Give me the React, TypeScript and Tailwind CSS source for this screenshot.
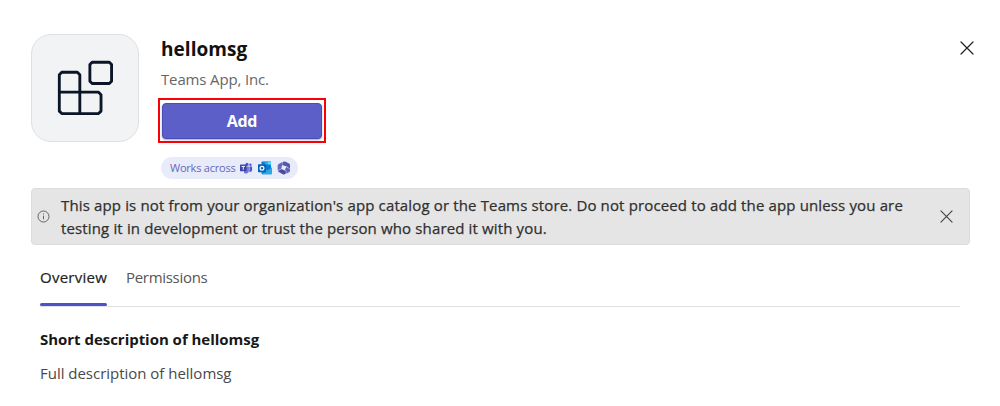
import React from "react";

function AppIcon() {
  return (
    <div className="h-[108px] w-[108px] shrink-0 rounded-[20px] border border-[#dfe0e2] bg-[#f2f3f5]">
      <svg viewBox="0.7 0.5 107.5 107.5" className="block h-full w-full" fill="none" stroke="#0b1528" strokeWidth="2.9" strokeLinejoin="round">
        <path d="M30.900 38.300h15.800l2.500 2.500v17.700h19l2.500 2.500v16.700l-2.500 2.500H30.900l-2.500-2.500V40.800Z" />
        <path d="M28.400 58.500H49.200V80.200" />
        <path d="M61.700 28.100h17.400l2.300 2.300v17l-2.300 2.300H61.700l-2.300-2.300v-17Z" />
      </svg>
    </div>
  );
}

function Cross({ className }: { className: string }) {
  return (
    <svg viewBox="0 0 14 14" className={className} fill="none" strokeLinecap="round">
      <path d="M1 1 13 13M13 1 1 13" />
    </svg>
  );
}

function TeamsIcon() {
  return (
    <svg viewBox="0 0 14 14" className="h-[14px] w-[14px]">
      <circle cx="8" cy="3.400" r="1.600" fill="#5059c9" />
      <circle cx="11.400" cy="3.700" r="1.200" fill="#5059c9" />
      <path d="M10.400 5.400h2.700v3.600a2 2 0 0 1-2.700 1.800Z" fill="#5059c9" />
      <path d="M5 5.400h4.900v4a2.900 2.900 0 0 1-4.900 2.400Z" fill="#7078d8" />
      <rect x="1" y="3.600" width="6.500" height="6.700" rx="0.600" fill="#3d43a8" />
      <path d="M2.500 5.400h3.500M4.250 5.400v3.400" stroke="#fff" strokeWidth="0.900" />
    </svg>
  );
}

function OutlookIcon() {
  return (
    <svg viewBox="0 0 14 14" className="h-[14px] w-[14px]">
      <rect x="3.500" y="0.500" width="9.500" height="9" rx="0.700" fill="#0f78d4" />
      <path d="M6.700.5H13v3H6.700Z" fill="#28a8ea" />
      <path d="M9.800.5H13v3H9.800Z" fill="#50d9ff" />
      <path d="M3.500 6.500 8.700 9.700 14 6.500v6a.8.8 0 0 1-.8.8h-9a.8.8 0 0 1-.7-.8Z" fill="#1490df" />
      <path d="m14 6.500-9.800 6.800h9a.8.8 0 0 0 .8-.8Z" fill="#28a8ea" />
      <rect y="3.200" width="8" height="8" rx="0.600" fill="#0364b8" />
      <circle cx="4" cy="7.200" r="1.900" fill="none" stroke="#fff" strokeWidth="1.200" />
    </svg>
  );
}

function MicrosoftAppIcon() {
  return (
    <svg viewBox="0 0 14 14" className="h-[14px] w-[14px]">
      <path d="M6 .7 8.200.4l3.900 2.200a1.700 1.700 0 0 1 .9 1.500v3.600L9.300 5.300 5.300 4.200V2Z" fill="#5558af" />
      <path d="M5 1.200v3.400l-.6 3L.7 9.400V4.700a2 2 0 0 1 1-1.700Z" fill="#6568bd" />
      <path d="m.9 9.900 3.500-1.800 4.400 2v2.300L7.600 13.300a2 2 0 0 1-1.800 0L1.900 11.100Z" fill="#484b9d" />
      <path d="m9.300 6 3.700 2v1.700a2 2 0 0 1-1 1.600l-2.700 1.500V9.900L7.800 9Z" fill="#6063b8" />
    </svg>
  );
}

export default function App() {
  return (
    <main className="h-[406px] w-[1000px] overflow-hidden bg-white pl-[31px] pt-[34px] font-['Open_Sans','Noto_Sans',sans-serif] text-[#242424]">
      <header className="flex h-[154px] w-[943px] items-start">
        <AppIcon />
        <div className="ml-[19px] flex flex-col items-start">
          <h1 className="ml-[3px] h-[32px] text-[19px] font-bold leading-[30px] tracking-[0.05px] text-[#111]">hellomsg</h1>
          <p className="ml-[3px] h-[32px] text-[15px] leading-[26px] tracking-[-0.15px] text-[#666]">Teams App, Inc.</p>
          <div className="h-[45px] w-[168px] border-2 border-[#fb0007] px-[2px] pt-[3px]">
            <button className="block h-[36px] w-full rounded-[4px] border border-[#4a4db8] bg-[#5b5fc7] text-[16px] font-bold leading-[34px] tracking-[-0.3px] text-white shadow-[0_1px_2px_#00000055]">Add</button>
          </div>
          <div className="ml-[3px] mt-[14px] flex h-[22px] w-[137px] items-center rounded-full bg-[#e8ebfa] pl-[9px] text-[#6669b8]">
            <span className="w-[69px] whitespace-nowrap text-[11px] tracking-[-0.22px]">Works across</span>
            <span className="flex gap-[5px]"><TeamsIcon /><OutlookIcon /><MicrosoftAppIcon /></span>
          </div>
        </div>
        <button aria-label="Close" className="ml-auto mt-[7px]"><Cross className="h-[14px] w-[14px] stroke-[#222] stroke-[1.2]" /></button>
      </header>

      <section className="flex h-[57px] w-[939px] items-center rounded-[4px] border border-[#dcdcdc] bg-[#e5e5e5] pl-[5px] pr-[16px]">
        <svg viewBox="0 0 13 13" className="h-[13px] w-[13px] shrink-0" fill="none" stroke="#555" strokeWidth="0.900">
          <circle cx="6.500" cy="6.500" r="5.500" />
          <path d="M6.500 5.700v3.600M6.500 3.500v1.100" />
        </svg>
        <p className="ml-[11px] whitespace-nowrap text-[15px] leading-[23px] tracking-[0.142px] text-[#303030] [-webkit-text-stroke:0.25px_#303030]">
          <span className="block">This app is not from your organization's app catalog or the Teams store. Do not proceed to add the app unless you are</span>
          <span className="block">testing it in development or trust the person who shared it with you.</span>
        </p>
        <button aria-label="Dismiss" className="ml-auto"><Cross className="h-[13px] w-[13px] stroke-[#444] stroke-[1.2]" /></button>
      </section>

      <nav className="ml-[9px] mt-[20px] flex h-[42px] w-[920px] border-b border-[#e0e0e0] text-[15px] leading-[24px]">
        <div className="relative w-[67px] whitespace-nowrap tracking-[0.25px] text-[#222] [-webkit-text-stroke:0.2px_#222]">
          Overview
          <span className="absolute bottom-0 left-0 h-[3px] w-full rounded-full bg-[#4f52c4]" />
        </div>
        <div className="ml-[19px] whitespace-nowrap tracking-[-0.3px] text-[#555]">Permissions</div>
      </nav>

      <article className="ml-[9px] mt-[20px]">
        <h2 className="h-[33px] text-[15px] font-bold leading-[25px] tracking-[-0.03px] text-[#181818]">Short description of hellomsg</h2>
        <p className="text-[15px] leading-[26px] tracking-[-0.02px] text-[#484848]">Full description of hellomsg</p>
      </article>
    </main>
  );
}
